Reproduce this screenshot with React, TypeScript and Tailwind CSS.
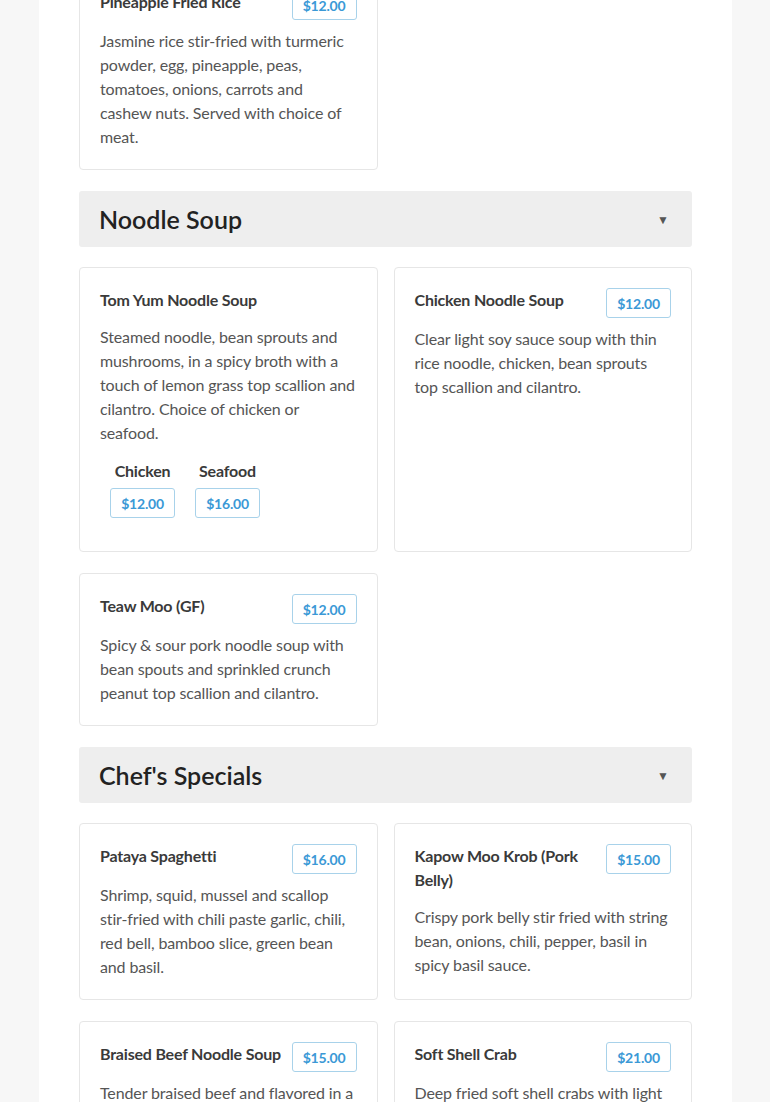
import React from "react";

type Item = { name: string; price?: string; desc: string; options?: { label: string; price: string }[] };

const Badge = ({ price, className = "" }: { price: string; className?: string }) => (
  <span
    className={`inline-flex h-[30px] w-[65px] shrink-0 items-center justify-center rounded-[3px] border border-[#a8d2ea] bg-white text-[14px] font-bold tracking-[-0.2px] text-[#3b99d6] ${className}`}
  >
    {price}
  </span>
);

const Card = ({ item, className = "" }: { item: Item; className?: string }) => (
  <div className={`rounded-[4px] border border-[#e6e6e6] bg-white px-5 pt-5 pb-5 ${className}`}>
    <div className="flex items-start justify-between gap-[4px]">
      <h4 className="mb-[13px] text-[16px] leading-6 font-bold tracking-[-0.2px] text-[#3a3a3a]">{item.name}</h4>
      {item.price && <Badge price={item.price} className="mb-[9px]" />}
    </div>
    <p className="text-[16px] leading-6 tracking-[-0.13px] text-[#555]">{item.desc}</p>
    {item.options && (
      <div className="mt-[15px] mb-[13px] ml-[10px] flex gap-5">
        {item.options.map((o) => (
          <div key={o.label} className="flex flex-col items-center">
            <span className="text-[16px] leading-[22px] font-bold tracking-[-0.2px] text-[#3a3a3a]">{o.label}</span>
            <Badge price={o.price} className="mt-[6px]" />
          </div>
        ))}
      </div>
    )}
  </div>
);

const Header = ({ title }: { title: string }) => (
  <div className="flex h-[56px] items-center justify-between rounded-[3px] bg-[#eeeeee] pr-[23px] pl-5">
    <h3 className="text-[25px] leading-none font-semibold text-[#222]">{title}</h3>
    <span className="pt-[2px] text-[12px] text-[#555]">▼</span>
  </div>
);

export default function App() {
  return (
    <div
      className="min-h-screen overflow-hidden bg-[#f7f7f7]"
      style={{ fontFamily: "Lato, 'Open Sans', sans-serif" }}
    >
      <div className="mx-[39px] w-[693px] bg-white px-10 pb-10">
        <div className="-mt-[31px] grid grid-cols-2 gap-x-4">
          <Card
            item={{
              name: "Pineapple Fried Rice",
              price: "$12.00",
              desc: "Jasmine rice stir-fried with turmeric powder, egg, pineapple, peas, tomatoes, onions, carrots and cashew nuts. Served with choice of meat.",
            }}
          />
        </div>
        <div className="mt-[21px]">
          <Header title="Noodle Soup" />
        </div>
        <div className="mt-5 grid grid-cols-2 gap-x-4 gap-y-[21px]">
          <Card
            item={{
              name: "Tom Yum Noodle Soup",
              desc: "Steamed noodle, bean sprouts and mushrooms, in a spicy broth with a touch of lemon grass top scallion and cilantro. Choice of chicken or seafood.",
              options: [
                { label: "Chicken", price: "$12.00" },
                { label: "Seafood", price: "$16.00" },
              ],
            }}
          />
          <Card
            item={{
              name: "Chicken Noodle Soup",
              price: "$12.00",
              desc: "Clear light soy sauce soup with thin rice noodle, chicken, bean sprouts top scallion and cilantro.",
            }}
          />
          <Card
            item={{
              name: "Teaw Moo (GF)",
              price: "$12.00",
              desc: "Spicy & sour pork noodle soup with bean spouts and sprinkled crunch peanut top scallion and cilantro.",
            }}
          />
        </div>
        <div className="mt-[21px]">
          <Header title="Chef's Specials" />
        </div>
        <div className="mt-5 grid grid-cols-2 gap-x-4 gap-y-[21px]">
          <Card
            item={{
              name: "Pataya Spaghetti",
              price: "$16.00",
              desc: "Shrimp, squid, mussel and scallop stir-fried with chili paste garlic, chili, red bell, bamboo slice, green bean and basil.",
            }}
          />
          <Card
            item={{
              name: "Kapow Moo Krob (Pork Belly)",
              price: "$15.00",
              desc: "Crispy pork belly stir fried with string bean, onions, chili, pepper, basil in spicy basil sauce.",
            }}
          />
          <Card
            item={{
              name: "Braised Beef Noodle Soup",
              price: "$15.00",
              desc: "Tender braised beef and flavored in a rich broth with rice noodle, bean sprouts, top scallion and cilantro.",
            }}
          />
          <Card
            item={{
              name: "Soft Shell Crab",
              price: "$21.00",
              desc: "Deep fried soft shell crabs with light batter served with sweet chili sauce.",
            }}
          />
        </div>
      </div>
    </div>
  );
}
